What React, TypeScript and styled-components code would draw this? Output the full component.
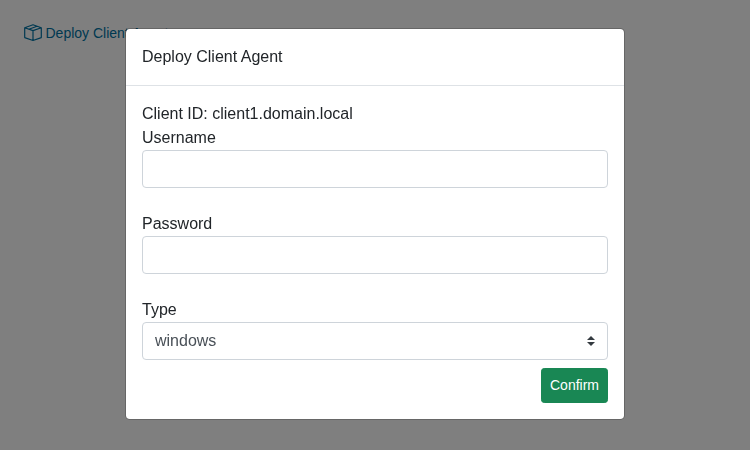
import React from 'react';
import styled, { createGlobalStyle } from 'styled-components';

const GlobalStyle = createGlobalStyle`
  *, *::before, *::after { box-sizing: border-box; }
  body {
    margin: 0;
    background: #fff;
    color: #212529;
    font: 400 16px/1.5 "Liberation Sans", Arial, sans-serif;
    overflow: hidden;
  }
`;

const Page = styled.main`
  height: 100vh;
  padding: 23px 24px;
`;

const DeployLink = styled.a`
  display: inline-flex;
  align-items: flex-start;
  gap: 3.5px;
  color: #0072a3;
  font-size: 14px;
  line-height: 21px;
  text-decoration: none;
`;

const BoxIcon = styled.svg`
  width: 18px;
  height: 18px;
  margin-top: 1px;
  fill: none;
  stroke: currentColor;
  stroke-width: 1.2;
  stroke-linejoin: round;
`;

const Overlay = styled.div`
  position: fixed;
  inset: 0;
  padding-top: 28px;
  background: rgba(0, 0, 0, 0.5);
`;

const Dialog = styled.div`
  width: 500px;
  margin: 0 auto;
  background: #fff;
  background-clip: padding-box;
  border: 1px solid rgba(0, 0, 0, 0.2);
  border-radius: 4.8px;
`;

const Header = styled.header`
  padding: 16px;
  border-bottom: 1px solid #dee2e6;
`;

const Title = styled.h5`
  margin: 0;
  font-size: 16px;
  font-weight: 400;
`;

const Body = styled.form`
  display: flex;
  flex-direction: column;
  padding: 16px;
`;

const Field = styled.label<{ $gap: number }>`
  display: flex;
  flex-direction: column;
  margin-bottom: ${({ $gap }) => $gap}px;
`;

const Input = styled.input`
  width: 100%;
  height: 38px;
  padding: 6px 12px;
  border: 1px solid #ced4da;
  border-radius: 4px;
  background: #fff;
  color: #495057;
  font: inherit;
`;

const SelectBox = styled.span`
  display: flex;
  align-items: center;
  height: 38px;
  padding-right: 12px;
  border: 1px solid #ced4da;
  border-radius: 4px;
`;

const Select = styled.select`
  flex: 1;
  height: 36px;
  padding: 0 12px;
  border: 0;
  background: transparent;
  color: #495057;
  font: inherit;
  appearance: none;
`;

const ConfirmButton = styled.button`
  align-self: flex-end;
  padding: 6px 8px;
  border: 1px solid #198754;
  border-radius: 3.2px;
  background: #198754;
  color: #fff;
  font: inherit;
  font-size: 14px;
`;

export default function App() {
  return (
    <>
      <GlobalStyle />
      <Page>
        <DeployLink href="#">
          <BoxIcon viewBox="0 0 18 18">
            <path d="M9 .8 17.3 3.7V13.6L9 16.5.7 13.6V3.7ZM.7 3.7 9 6.6 17.3 3.7M9 6.6V16.5M4.8 5.2 13.1 2.2" />
          </BoxIcon>
          Deploy Client Agent
        </DeployLink>
      </Page>
      <Overlay>
        <Dialog role="dialog" aria-modal="true">
          <Header>
            <Title>Deploy Client Agent</Title>
          </Header>
          <Body>
            <div>Client ID: client1.domain.local</div>
            <Field $gap={24}>
              Username
              <Input type="text" />
            </Field>
            <Field $gap={24}>
              Password
              <Input type="password" />
            </Field>
            <Field $gap={8}>
              Type
              <SelectBox>
                <Select defaultValue="windows">
                  <option>windows</option>
                </Select>
                <svg width="8" height="10" viewBox="0 0 4 5">
                  <path fill="#343a40" d="M2 0L0 2h4zm0 5L0 3h4z" />
                </svg>
              </SelectBox>
            </Field>
            <ConfirmButton type="button">Confirm</ConfirmButton>
          </Body>
        </Dialog>
      </Overlay>
    </>
  );
}
